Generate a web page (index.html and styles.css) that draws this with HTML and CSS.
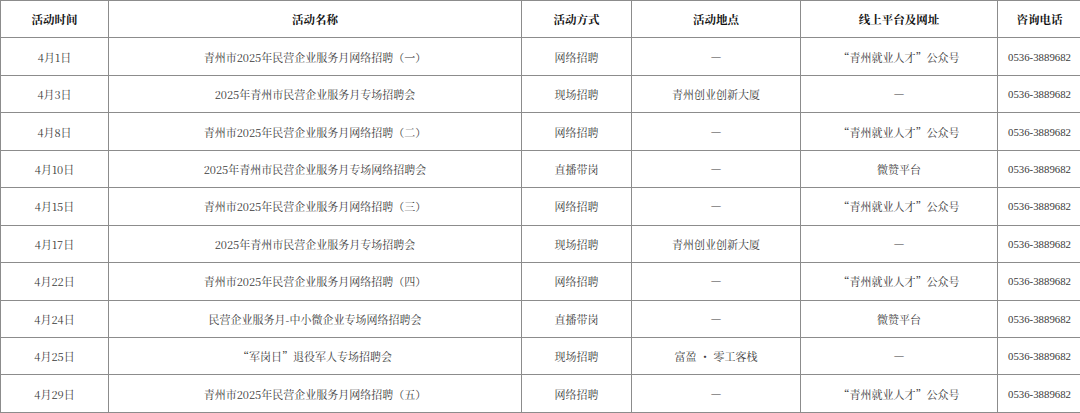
FILE: index.html
```html
<!DOCTYPE html>
<html lang="zh">
<head>
<meta charset="utf-8">
<title>活动安排</title>
<link rel="stylesheet" href="styles.css">
</head>
<body>
<table class="schedule">
  <colgroup>
    <col class="c-time"><col class="c-name"><col class="c-way"><col class="c-place"><col class="c-online"><col class="c-phone">
  </colgroup>
  <thead>
    <tr><th>活动时间</th><th>活动名称</th><th>活动方式</th><th>活动地点</th><th>线上平台及网址</th><th>咨询电话</th></tr>
  </thead>
  <tbody>
    <tr><td>4月1日</td><td>青州市2025年民营企业服务月网络招聘（一）</td><td>网络招聘</td><td class="dash">—</td><td>“青州就业人才”公众号</td><td class="phone">0536-3889682</td></tr>
    <tr><td>4月3日</td><td>2025年青州市民营企业服务月专场招聘会</td><td>现场招聘</td><td>青州创业创新大厦</td><td class="dash">—</td><td class="phone">0536-3889682</td></tr>
    <tr><td>4月8日</td><td>青州市2025年民营企业服务月网络招聘（二）</td><td>网络招聘</td><td class="dash">—</td><td>“青州就业人才”公众号</td><td class="phone">0536-3889682</td></tr>
    <tr><td>4月10日</td><td>2025年青州市民营企业服务月专场网络招聘会</td><td>直播带岗</td><td class="dash">—</td><td>微赞平台</td><td class="phone">0536-3889682</td></tr>
    <tr><td>4月15日</td><td>青州市2025年民营企业服务月网络招聘（三）</td><td>网络招聘</td><td class="dash">—</td><td>“青州就业人才”公众号</td><td class="phone">0536-3889682</td></tr>
    <tr><td>4月17日</td><td>2025年青州市民营企业服务月专场招聘会</td><td>现场招聘</td><td>青州创业创新大厦</td><td class="dash">—</td><td class="phone">0536-3889682</td></tr>
    <tr><td>4月22日</td><td>青州市2025年民营企业服务月网络招聘（四）</td><td>网络招聘</td><td class="dash">—</td><td>“青州就业人才”公众号</td><td class="phone">0536-3889682</td></tr>
    <tr><td>4月24日</td><td>民营企业服务月-中小微企业专场网络招聘会</td><td>直播带岗</td><td class="dash">—</td><td>微赞平台</td><td class="phone">0536-3889682</td></tr>
    <tr><td>4月25日</td><td>“军岗日”退役军人专场招聘会</td><td>现场招聘</td><td>富盈<span class="dot">•</span>零工客栈</td><td class="dash">—</td><td class="phone">0536-3889682</td></tr>
    <tr><td>4月29日</td><td>青州市2025年民营企业服务月网络招聘（五）</td><td>网络招聘</td><td class="dash">—</td><td>“青州就业人才”公众号</td><td class="phone">0536-3889682</td></tr>
  </tbody>
</table>
</body>
</html>
```
FILE: styles.css
```css
html, body {
  margin: 0;
  padding: 0;
  background: #ffffff;
}

.schedule {
  border-collapse: collapse;
  table-layout: fixed;
  width: 1081px;
  font-family: "Noto Serif CJK SC", "Liberation Serif", "Noto Sans CJK SC", serif;
  font-size: 11px;
  color: #3a3a3a;
}

.c-time { width: 108px; }
.c-name { width: 413px; }
.c-way { width: 110px; }
.c-place { width: 169px; }
.c-online { width: 197px; }
.c-phone { width: 84px; }

.schedule th,
.schedule td {
  border: 1px solid #8c8c8c;
  height: 36.45px;
  padding: 0;
  text-align: center;
  vertical-align: middle;
  white-space: nowrap;
}

.schedule th {
  font-weight: bold;
  font-size: 11.5px;
  color: #111111;
}

.schedule td.phone {
  font-family: "Liberation Serif", serif;
  font-size: 10.8px;
}

.schedule td.dash {
  font-family: "Noto Serif CJK SC", "Noto Sans CJK SC", sans-serif;
  font-feature-settings: "fwid";
  font-size: 11px;
}

.dot {
  display: inline-block;
  margin: 0 3px;
  font-family: "Noto Sans CJK SC", sans-serif;
}
```
